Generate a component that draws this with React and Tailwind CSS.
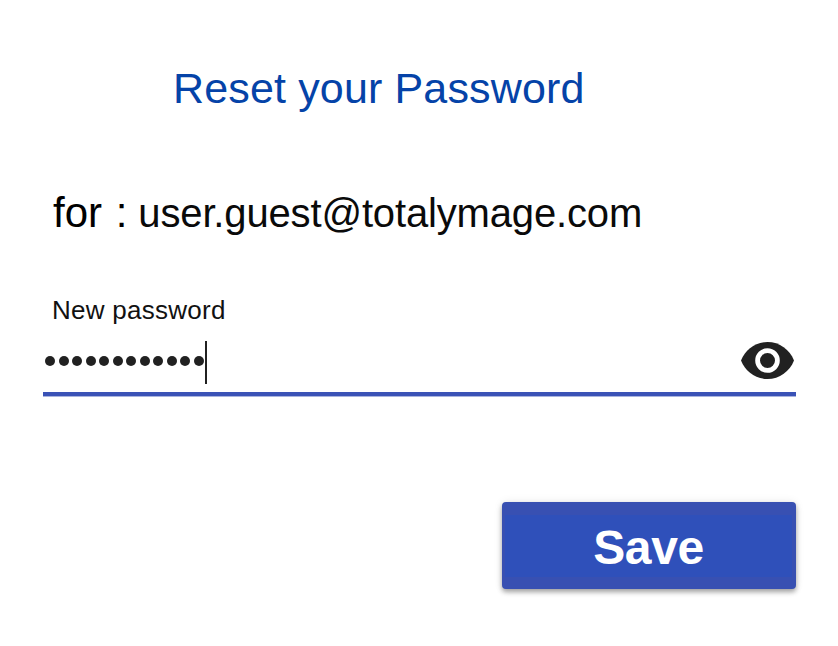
import React, { useState } from 'react';

const EyeIcon = () => (
  <svg viewBox="0 0 53 37" className="h-[37px] w-[53px]" fill="#212121">
    <path d="M26.5 0C14.5 0 4.2 7.7 0 18.5 4.2 29.3 14.5 37 26.5 37S48.8 29.3 53 18.5C48.8 7.7 38.5 0 26.5 0z" />
    <circle cx="26.5" cy="18.5" r="9.9" fill="none" stroke="#fff" strokeWidth="4.8" />
  </svg>
);

const PasswordField = () => {
  const [dots] = useState(12);

  return (
    <div className="mt-[58px] ml-[43px] w-[753px]">
      <label className="block pl-[9px] text-[26px] leading-[30px] tracking-[0.27px] text-[#111]">New password</label>
      <div className="mt-[16px] flex h-[55px] items-start justify-between border-b-4 border-[#3a52b6] shadow-[0_1px_0_#a9b3de]">
        <div className="flex h-[43px] items-center gap-[3.52px] border-r-2 border-[#212121] pr-[1px] pb-[4px] pl-[2px]">
          {Array.from({ length: dots }, (_, i) => (
            <span key={i} className="h-[10px] w-[10px] rounded-full bg-[#212121]" />
          ))}
        </div>
        <button type="button" aria-label="Show password" className="mt-px mr-[2px]">
          <EyeIcon />
        </button>
      </div>
    </div>
  );
};

const App = () => {
  return (
    <div className="flex h-[646px] w-[838px] flex-col overflow-hidden bg-white font-['Liberation_Sans',Arial,sans-serif] whitespace-nowrap">
      <h1 className="mt-[63px] ml-[173px] text-[43px] leading-[50px] tracking-[0.15px] text-[#0543a8]">
        Reset your Password
      </h1>
      <p className="mt-[76px] ml-[53px] flex items-baseline gap-[11px] leading-[48px] text-black">
        <span className="text-[42px] [word-spacing:2px]">for :</span>
        <span className="text-[40px] tracking-[-0.15px] text-[#0a0a0a]">user.guest@totalymage.com</span>
      </p>
      <PasswordField />
      <button
        type="button"
        className="mt-[106px] ml-[502px] h-[87px] w-[294px] rounded-[4px] border-t-[13px] border-r-[4px] border-b-[12px] border-l-[3px] border-[#3850b2] bg-[#2f50ba] pt-[3px] text-[48px] leading-[50px] font-bold tracking-[-0.4px] text-white shadow-[0_3px_5px_rgba(0,0,0,0.35),0_0_10px_rgba(0,0,0,0.08)]"
      >
        Save
      </button>
    </div>
  );
};

export default App;
